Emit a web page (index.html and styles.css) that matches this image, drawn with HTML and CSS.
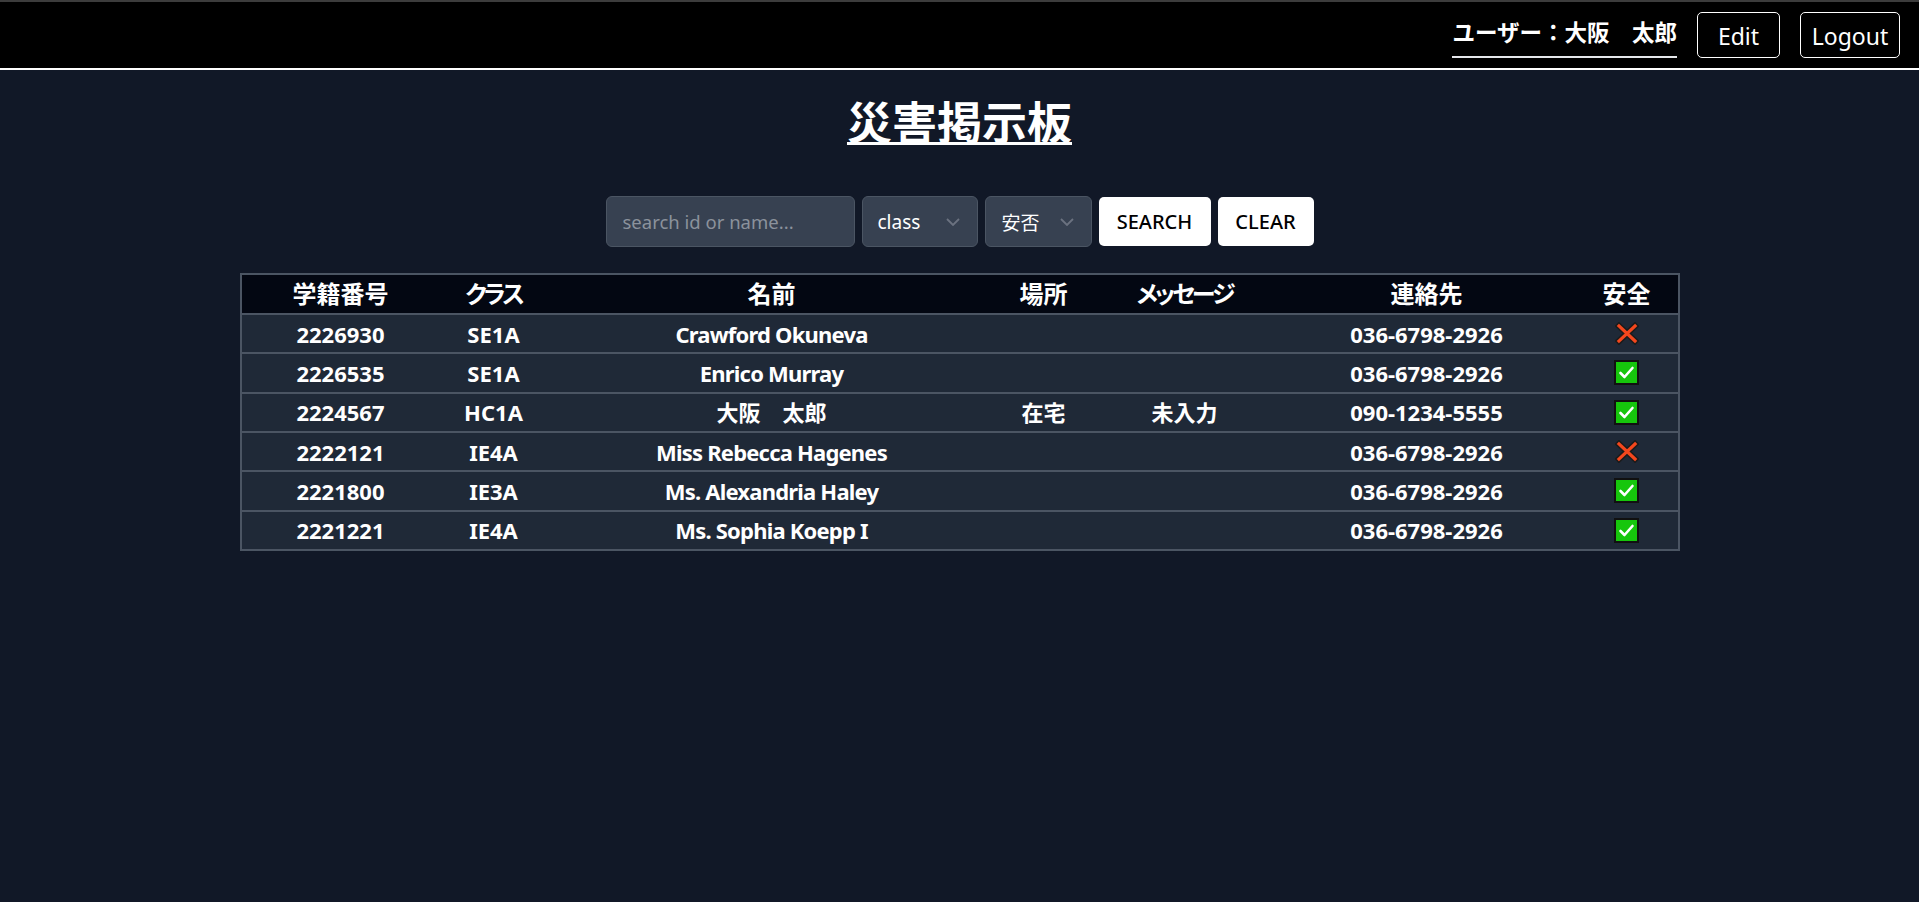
FILE: index.html
```html
<!DOCTYPE html>
<html lang="ja">
<head>
<meta charset="utf-8">
<title>災害掲示板</title>
<link rel="stylesheet" href="styles.css">
</head>
<body>
<header class="topbar">
  <span class="user-label">ユーザー：大阪　太郎</span>
  <button class="outline-btn edit-btn">Edit</button>
  <button class="outline-btn logout-btn">Logout</button>
</header>
<main class="main">
  <h1 class="title">災害掲示板</h1>
  <div class="search-row">
    <input class="search-input" type="text" placeholder="search id or name...">
    <div class="fake-select class-select">
      <span>class</span>
      <svg class="chev" width="14" height="8" viewBox="0 0 14 8"><polyline points="1,1 7,7 13,1" fill="none" stroke="#6b7280" stroke-width="1.8"/></svg>
    </div>
    <div class="fake-select safe-select">
      <span>安否</span>
      <svg class="chev" width="14" height="8" viewBox="0 0 14 8"><polyline points="1,1 7,7 13,1" fill="none" stroke="#6b7280" stroke-width="1.8"/></svg>
    </div>
    <button class="solid-btn search-btn">SEARCH</button>
    <button class="solid-btn clear-btn">CLEAR</button>
  </div>
  <table class="board">
    <colgroup>
      <col class="c-id"><col class="c-class"><col class="c-name"><col class="c-place"><col class="c-msg"><col class="c-tel"><col class="c-safe">
    </colgroup>
    <thead>
      <tr><th>学籍番号</th><th class="kana">クラス</th><th>名前</th><th>場所</th><th class="kana">メッセージ</th><th>連絡先</th><th>安全</th></tr>
    </thead>
    <tbody>
      <tr><td>2226930</td><td>SE1A</td><td class="name">Crawford Okuneva</td><td></td><td></td><td>036-6798-2926</td><td><svg class="ico" width="24" height="23" viewBox="0 0 24 23"><g stroke-linecap="square"><path d="M4 4 L20 19 M20 4 L4 19" stroke="#1b1b1b" stroke-width="6.2" fill="none"/><path d="M4 4 L20 19 M20 4 L4 19" stroke="#f4471d" stroke-width="3.2" fill="none"/></g></svg></td></tr>
      <tr><td>2226535</td><td>SE1A</td><td class="name">Enrico Murray</td><td></td><td></td><td>036-6798-2926</td><td><svg class="ico" width="25" height="25" viewBox="0 0 25 25"><rect x="1" y="1" width="23" height="23" fill="#16c60c" stroke="#111" stroke-width="2"/><polyline points="6.5,13 10.5,17 18.5,8" fill="none" stroke="#fff" stroke-width="2.6" stroke-linecap="round" stroke-linejoin="round"/></svg></td></tr>
      <tr><td>2224567</td><td>HC1A</td><td>大阪　太郎</td><td>在宅</td><td>未入力</td><td>090-1234-5555</td><td><svg class="ico" width="25" height="25" viewBox="0 0 25 25"><rect x="1" y="1" width="23" height="23" fill="#16c60c" stroke="#111" stroke-width="2"/><polyline points="6.5,13 10.5,17 18.5,8" fill="none" stroke="#fff" stroke-width="2.6" stroke-linecap="round" stroke-linejoin="round"/></svg></td></tr>
      <tr><td>2222121</td><td>IE4A</td><td class="name">Miss Rebecca Hagenes</td><td></td><td></td><td>036-6798-2926</td><td><svg class="ico" width="24" height="23" viewBox="0 0 24 23"><g stroke-linecap="square"><path d="M4 4 L20 19 M20 4 L4 19" stroke="#1b1b1b" stroke-width="6.2" fill="none"/><path d="M4 4 L20 19 M20 4 L4 19" stroke="#f4471d" stroke-width="3.2" fill="none"/></g></svg></td></tr>
      <tr><td>2221800</td><td>IE3A</td><td class="name">Ms. Alexandria Haley</td><td></td><td></td><td>036-6798-2926</td><td><svg class="ico" width="25" height="25" viewBox="0 0 25 25"><rect x="1" y="1" width="23" height="23" fill="#16c60c" stroke="#111" stroke-width="2"/><polyline points="6.5,13 10.5,17 18.5,8" fill="none" stroke="#fff" stroke-width="2.6" stroke-linecap="round" stroke-linejoin="round"/></svg></td></tr>
      <tr><td>2221221</td><td>IE4A</td><td class="name">Ms. Sophia Koepp I</td><td></td><td></td><td>036-6798-2926</td><td><svg class="ico" width="25" height="25" viewBox="0 0 25 25"><rect x="1" y="1" width="23" height="23" fill="#16c60c" stroke="#111" stroke-width="2"/><polyline points="6.5,13 10.5,17 18.5,8" fill="none" stroke="#fff" stroke-width="2.6" stroke-linecap="round" stroke-linejoin="round"/></svg></td></tr>
    </tbody>
  </table>
</main>
</body>
</html>
```
FILE: styles.css
```css
* { box-sizing: border-box; }
html, body { margin: 0; padding: 0; }
body {
  background: #111827;
  color: #fff;
  font-family: "Noto Sans", "Noto Sans CJK JP", sans-serif;
  min-height: 902px;
}
.topbar {
  box-sizing: content-box;
  height: 66px;
  background: #000;
  border-top: 2px solid #3c3c3c;
  border-bottom: 2px solid #fff;
  display: flex;
  justify-content: flex-end;
  align-items: center;
  gap: 20px;
  padding-right: 19px;
}
.user-label {
  font-size: 22.5px;
  font-weight: 700;
  line-height: 28px;
  padding-top: 2px;
  padding-bottom: 9px;
  border-bottom: 2px solid #e5e7eb;
  margin-top: 5px;
}
.outline-btn {
  height: 46px;
  background: transparent;
  color: #fff;
  border: 1px solid #fff;
  border-radius: 5px;
  font-family: "Noto Sans", sans-serif;
  font-size: 23px;
  padding: 2px 0 0;
}
.edit-btn { width: 83px; }
.logout-btn { width: 100px; }
.main { display: flex; flex-direction: column; align-items: center; }
.title {
  margin: 20px 0 0;
  font-size: 45px;
  line-height: 66px;
  font-weight: 700;
  text-decoration: underline;
  text-decoration-thickness: 3px;
}
.search-row {
  margin-top: 40px;
  display: flex;
  align-items: center;
  gap: 7px;
}
.search-input {
  width: 249px;
  height: 51px;
  background: #374151;
  border: 1px solid #4b5563;
  border-radius: 6px;
  padding: 0 16px;
  font-family: "Noto Sans", sans-serif;
  font-size: 18.5px;
  color: #fff;
  outline: none;
}
.search-input::placeholder { color: #8b929c; }
.fake-select {
  height: 51px;
  background: #374151;
  border: 1px solid #4b5563;
  border-radius: 6px;
  display: flex;
  align-items: center;
  justify-content: space-between;
  padding: 0 17px 0 15px;
  font-size: 19px;
  color: #fff;
}
.class-select { width: 116px; }
.safe-select { width: 107px; padding-left: 16px; }
.chev { display: block; }
.solid-btn {
  height: 49px;
  background: #fff;
  color: #000;
  border: none;
  border-radius: 5px;
  font-family: "Noto Sans", sans-serif;
  font-size: 20px;
  font-weight: 500;
  padding: 0;
}
.search-btn { width: 112px; }
.clear-btn { width: 96px; }
.board {
  margin-top: 26px;
  width: 1440px;
  table-layout: fixed;
  border-collapse: separate;
  border-spacing: 0;
  border: 2px solid #4b5563;
}
.c-id { width: 198px; }
.c-class { width: 108px; }
.c-name { width: 448px; }
.c-place { width: 96px; }
.c-msg { width: 186px; }
.c-tel { width: 298px; }
.c-safe { width: 102px; }
.board th {
  background: #030712;
  height: 38px;
  padding: 0;
  font-size: 24px;
  font-weight: 700;
  line-height: 38px;
  font-feature-settings: "palt";
}
.board th.kana { letter-spacing: -3px; }
.board td {
  background: #1f2937;
  height: 39.33px;
  padding: 0;
  border-top: 2px solid #4b5563;
  text-align: center;
  vertical-align: middle;
  font-size: 22px;
  font-weight: 700;
  line-height: 30px;
}
.board td.name { letter-spacing: -0.8px; }
.ico { display: block; margin: 0 auto; }
```
